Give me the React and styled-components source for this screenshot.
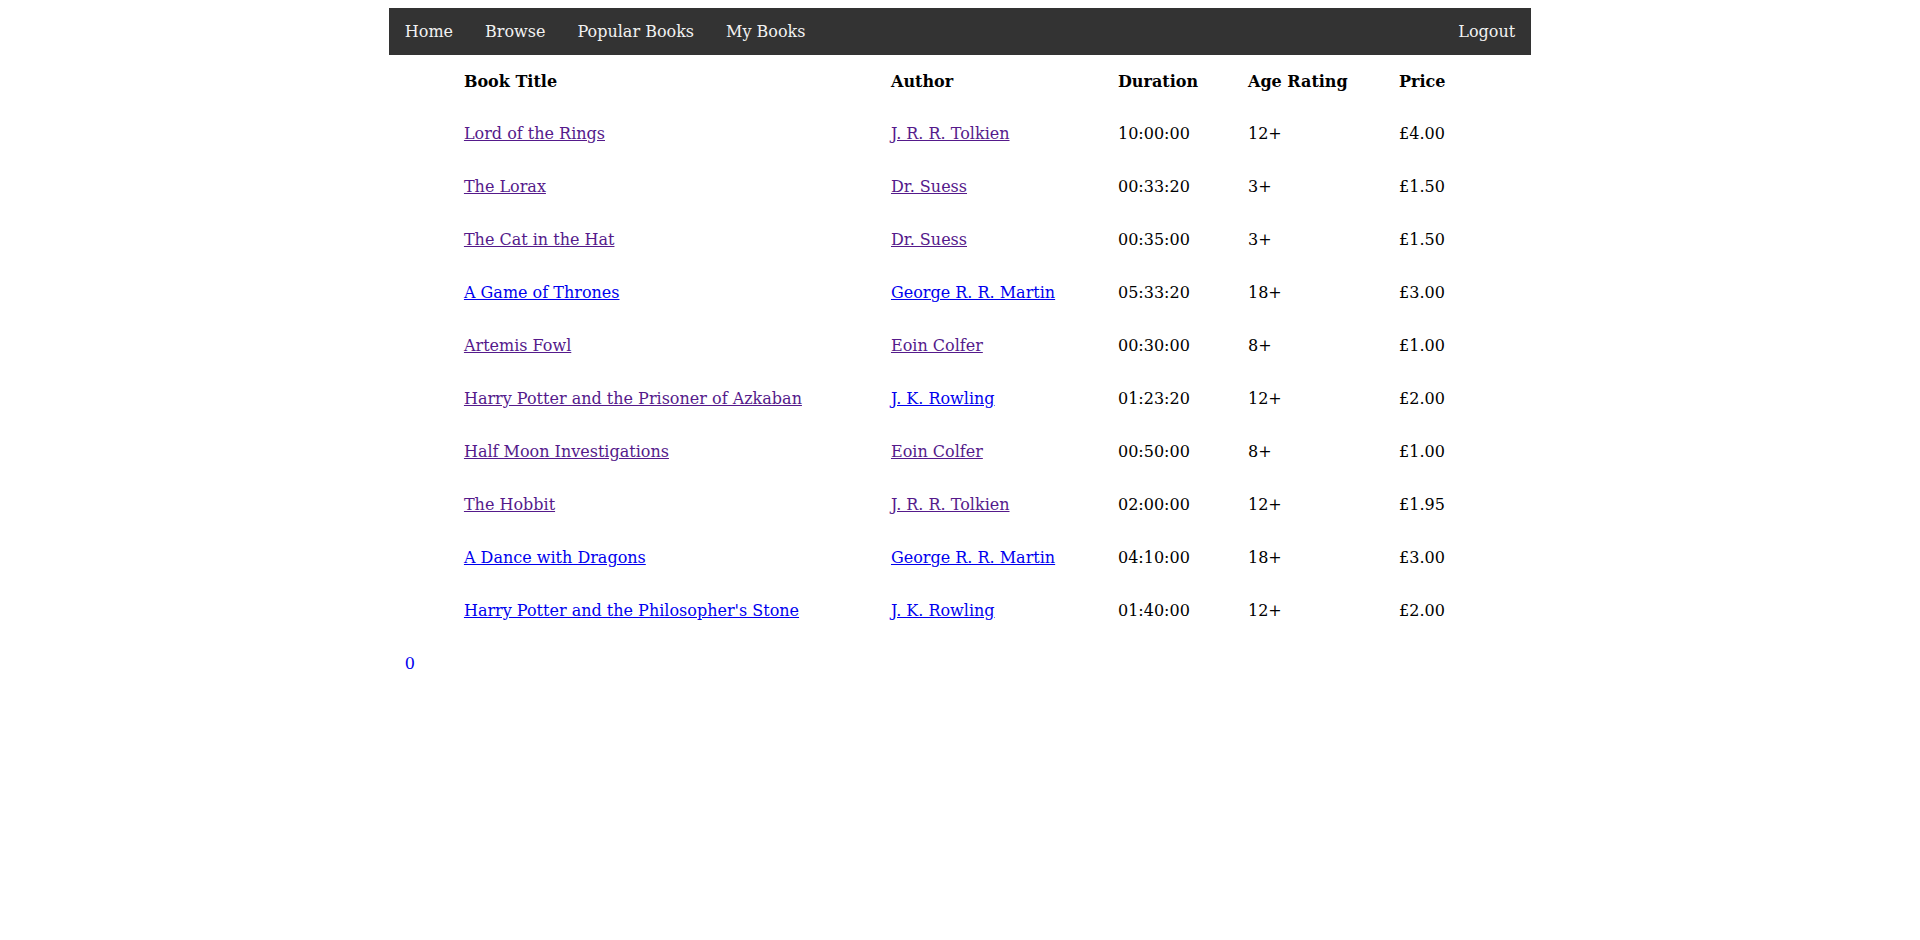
import React from 'react';
import styled, { createGlobalStyle } from 'styled-components';

const books = [
  { title: 'Lord of the Rings', author: 'J. R. R. Tolkien', duration: '10:00:00', age: '12+', price: '£4.00', seenTitle: true, seenAuthor: true },
  { title: 'The Lorax', author: 'Dr. Suess', duration: '00:33:20', age: '3+', price: '£1.50', seenTitle: true, seenAuthor: true },
  { title: 'The Cat in the Hat', author: 'Dr. Suess', duration: '00:35:00', age: '3+', price: '£1.50', seenTitle: true, seenAuthor: true },
  { title: 'A Game of Thrones', author: 'George R. R. Martin', duration: '05:33:20', age: '18+', price: '£3.00', seenTitle: false, seenAuthor: false },
  { title: 'Artemis Fowl', author: 'Eoin Colfer', duration: '00:30:00', age: '8+', price: '£1.00', seenTitle: true, seenAuthor: true },
  { title: 'Harry Potter and the Prisoner of Azkaban', author: 'J. K. Rowling', duration: '01:23:20', age: '12+', price: '£2.00', seenTitle: true, seenAuthor: false },
  { title: 'Half Moon Investigations', author: 'Eoin Colfer', duration: '00:50:00', age: '8+', price: '£1.00', seenTitle: true, seenAuthor: true },
  { title: 'The Hobbit', author: 'J. R. R. Tolkien', duration: '02:00:00', age: '12+', price: '£1.95', seenTitle: true, seenAuthor: true },
  { title: 'A Dance with Dragons', author: 'George R. R. Martin', duration: '04:10:00', age: '18+', price: '£3.00', seenTitle: false, seenAuthor: false },
  { title: "Harry Potter and the Philosopher's Stone", author: 'J. K. Rowling', duration: '01:40:00', age: '12+', price: '£2.00', seenTitle: false, seenAuthor: false },
];

const columns = [
  { label: 'Book Title', width: 425 },
  { label: 'Author', width: 225 },
  { label: 'Duration', width: 128 },
  { label: 'Age Rating', width: 149 },
  { label: 'Price', width: 89 },
];

export default function App() {
  return (
    <>
      <GlobalStyle />
      <Page>
        <NavBar>
          <NavLink href="#">Home</NavLink>
          <NavLink href="#">Browse</NavLink>
          <NavLink href="#">Popular Books</NavLink>
          <NavLink href="#">My Books</NavLink>
          <NavLink href="#" $right>Logout</NavLink>
        </NavBar>
        <BookTable>
          <thead>
            <tr>
              {columns.map((c) => (
                <HeadCell key={c.label} $width={c.width}>{c.label}</HeadCell>
              ))}
            </tr>
          </thead>
          <tbody>
            {books.map((b, i) => (
              <tr key={i}>
                <Cell><BookLink href="#" $visited={b.seenTitle}>{b.title}</BookLink></Cell>
                <Cell><BookLink href="#" $visited={b.seenAuthor}>{b.author}</BookLink></Cell>
                <Cell>{b.duration}</Cell>
                <Cell>{b.age}</Cell>
                <Cell>{b.price}</Cell>
              </tr>
            ))}
          </tbody>
        </BookTable>
        <Count>0</Count>
      </Page>
    </>
  );
}

const GlobalStyle = createGlobalStyle`
  body {
    margin: 8px;
    background: #fff;
    font-family: "DejaVu Serif", serif;
    font-size: 16px;
    color: #000;
  }
`;

const Page = styled.div`
  width: 60%;
  margin: 0 auto;
`;

const NavBar = styled.nav`
  display: flex;
  background: #333;
`;

const NavLink = styled.a`
  display: block;
  padding: 14px 16px;
  color: #f2f2f2;
  text-decoration: none;
  margin-left: ${(p) => (p.$right ? 'auto' : '0')};
`;

const BookTable = styled.table`
  width: 90%;
  margin: 0 auto;
  border-spacing: 2px;
  table-layout: fixed;
`;

const HeadCell = styled.th`
  box-sizing: border-box;
  width: ${(p) => p.$width}px;
  padding: 15px 16px;
  text-align: left;
  font-weight: bold;
`;

const Cell = styled.td`
  padding: 16px;
  text-align: left;
`;

const BookLink = styled.a`
  color: ${(p) => (p.$visited ? '#551a8b' : '#0000ee')};
  text-decoration: underline;
`;

const Count = styled.p`
  margin: 16px 0;
  padding-left: 16px;
  color: #0000ee;
`;
